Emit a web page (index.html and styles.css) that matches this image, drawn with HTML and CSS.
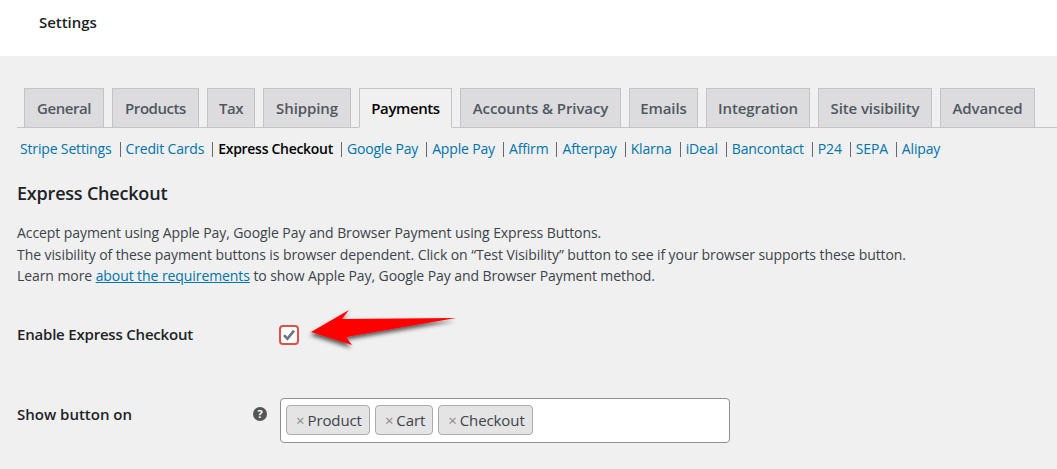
FILE: index.html
```html
<!DOCTYPE html>
<html lang="en">
<head>
<meta charset="utf-8">
<title>Settings</title>
<link rel="stylesheet" href="styles.css">
</head>
<body>
<header class="topbar"><h1 class="topbar-title">Settings</h1></header>
<main class="content">
  <nav class="tabs">
    <a class="tab tab-general">General</a><a class="tab tab-products">Products</a><a class="tab tab-tax">Tax</a><a class="tab tab-shipping">Shipping</a><a class="tab tab-active">Payments</a><a class="tab tab-accounts">Accounts &amp; Privacy</a><a class="tab tab-emails">Emails</a><a class="tab tab-integration">Integration</a><a class="tab tab-site">Site visibility</a><a class="tab tab-advanced">Advanced</a>
  </nav>
  <ul class="subnav">
    <li><a>Stripe Settings</a></li><li><a>Credit Cards</a></li><li><a class="current">Express Checkout</a></li><li><a>Google Pay</a></li><li><a>Apple Pay</a></li><li><a>Affirm</a></li><li><a>Afterpay</a></li><li><a>Klarna</a></li><li><a>iDeal</a></li><li><a>Bancontact</a></li><li><a>P24</a></li><li><a>SEPA</a></li><li><a>Alipay</a></li>
  </ul>
  <h2 class="section-title">Express Checkout</h2>
  <p class="desc">Accept payment using Apple Pay, Google Pay and Browser Payment using Express Buttons.<br>The visibility of these payment buttons is browser dependent. Click on “Test Visibility” button to see if your browser supports these button.<br>Learn more <a class="link">about the requirements</a> to show Apple Pay, Google Pay and Browser Payment method.</p>
  <div class="row row-enable">
    <div class="label">Enable Express Checkout</div>
    <div class="checkbox">
      <svg width="14" height="14" viewBox="0 0 14 14"><path d="M2 7.2 5.4 10.8 12 2.6" fill="none" stroke="#6b7580" stroke-width="2.6"/></svg>
    </div>
  </div>
  <div class="row row-show">
    <div class="label">Show button on</div>
    <svg class="help" width="14" height="14" viewBox="0 0 14 14"><circle cx="7" cy="7" r="7" fill="#555"/><text x="7" y="11" text-anchor="middle" class="help-mark">?</text></svg>
    <div class="select">
      <span class="chip"><span class="x">×</span>Product</span><span class="chip"><span class="x">×</span>Cart</span><span class="chip"><span class="x">×</span>Checkout</span>
    </div>
  </div>
</main>
<svg class="arrow" width="170" height="60" viewBox="0 0 170 60">
  <defs><filter id="arrow-shadow" x="-10%" y="-20%" width="120%" height="150%"><feDropShadow dx="-1" dy="3" stdDeviation="2" flood-color="#000" flood-opacity=".65"/></filter></defs>
  <path d="M6 27 44 5 37 14 151 13 41 32 47 40Z" fill="#f00" filter="url(#arrow-shadow)"/>
</svg>
</body>
</html>
```
FILE: styles.css
```css
* { box-sizing: border-box; }
html, body { margin: 0; height: 469px; overflow: hidden; }
body { background: #f0f0f1; font-family: "Open Sans", "Noto Sans", sans-serif; color: #3c434a; position: relative; }
.topbar { height: 56px; background: #fff; padding: 12px 0 0 39px; }
.topbar-title { margin: 0; font-size: 15px; line-height: 20px; font-weight: 600; color: #1d2327; letter-spacing: -.05px; }
.content { padding: 32px 0 0 17px; }
.tabs { display: flex; height: 40px; gap: 8px; padding-left: 7px; border-bottom: 1px solid #c3c4c7; }
.tab { height: 40px; line-height: 38px; text-align: center; background: #dcdcde; border: 1px solid #c3c4c7; font-size: 15px; font-weight: 600; color: #50575e; letter-spacing: -.1px; white-space: nowrap; }
.tab-general { width: 80px; letter-spacing: -.45px; }
.tab-products { width: 87px; letter-spacing: -.45px; }
.tab-tax { width: 48px; letter-spacing: -.45px; }
.tab-shipping { width: 88px; }
.tab-active { width: 93px; background: #f0f0f1; border-bottom-color: #f0f0f1; color: #000; letter-spacing: -.4px; }
.tab-accounts { width: 161px; }
.tab-emails { width: 69px; }
.tab-integration { width: 104px; }
.tab-site { width: 114px; }
.tab-advanced { width: 95px; }
.subnav { display: flex; list-style: none; margin: 10px 0 0 3px; padding: 0; font-size: 14px; line-height: 22px; letter-spacing: -.16px; }
.subnav li { white-space: nowrap; }
.subnav li + li::before { content: ""; display: inline-block; width: 1px; height: 15px; background: #646970; vertical-align: -3px; margin: 0 5px 0 8px; }
.subnav a { color: #0073aa; }
.subnav a.current { color: #000; font-weight: 600; letter-spacing: -.3px; }
.section-title { margin: 21px 0 0; font-size: 18px; line-height: 24px; font-weight: 600; color: #1d2327; letter-spacing: -.2px; }
.desc { margin: 17px 0 0; font-size: 14px; line-height: 21.5px; letter-spacing: -.08px; }
.link { color: #0073aa; text-decoration: underline; }
.row { display: flex; align-items: center; }
.label { width: 262px; font-size: 15px; font-weight: 600; color: #1d2327; letter-spacing: -.2px; }
.row-enable { margin-top: 38px; height: 21px; }
.row-enable .label { padding-bottom: 2px; }
.checkbox { width: 20px; height: 20px; border: 2px solid #e2504c; border-radius: 4px; background: #fff; display: flex; align-items: center; justify-content: center; }
.row-show { margin-top: 52px; align-items: flex-start; }
.row-show .label { width: 236px; padding-top: 6px; line-height: 20px; letter-spacing: 0; }
.help { margin: 9px 13px 0 0; display: block; }
.help-mark { font-size: 11px; font-weight: 700; fill: #fff; font-family: "Open Sans", sans-serif; }
.select { width: 450px; height: 45px; background: #fff; border: 1px solid #8c8f94; border-radius: 4px; padding: 6px 5px; display: flex; gap: 5px; }
.chip { height: 30px; padding: 0 7px 0 9px; background: #e4e4e4; border: 1px solid #aaa; border-radius: 4px; font-size: 15px; line-height: 28px; color: #3c434a; letter-spacing: -.1px; }
.x { color: #888; margin-right: 3px; }
.arrow { position: absolute; left: 305px; top: 305px; }
```
